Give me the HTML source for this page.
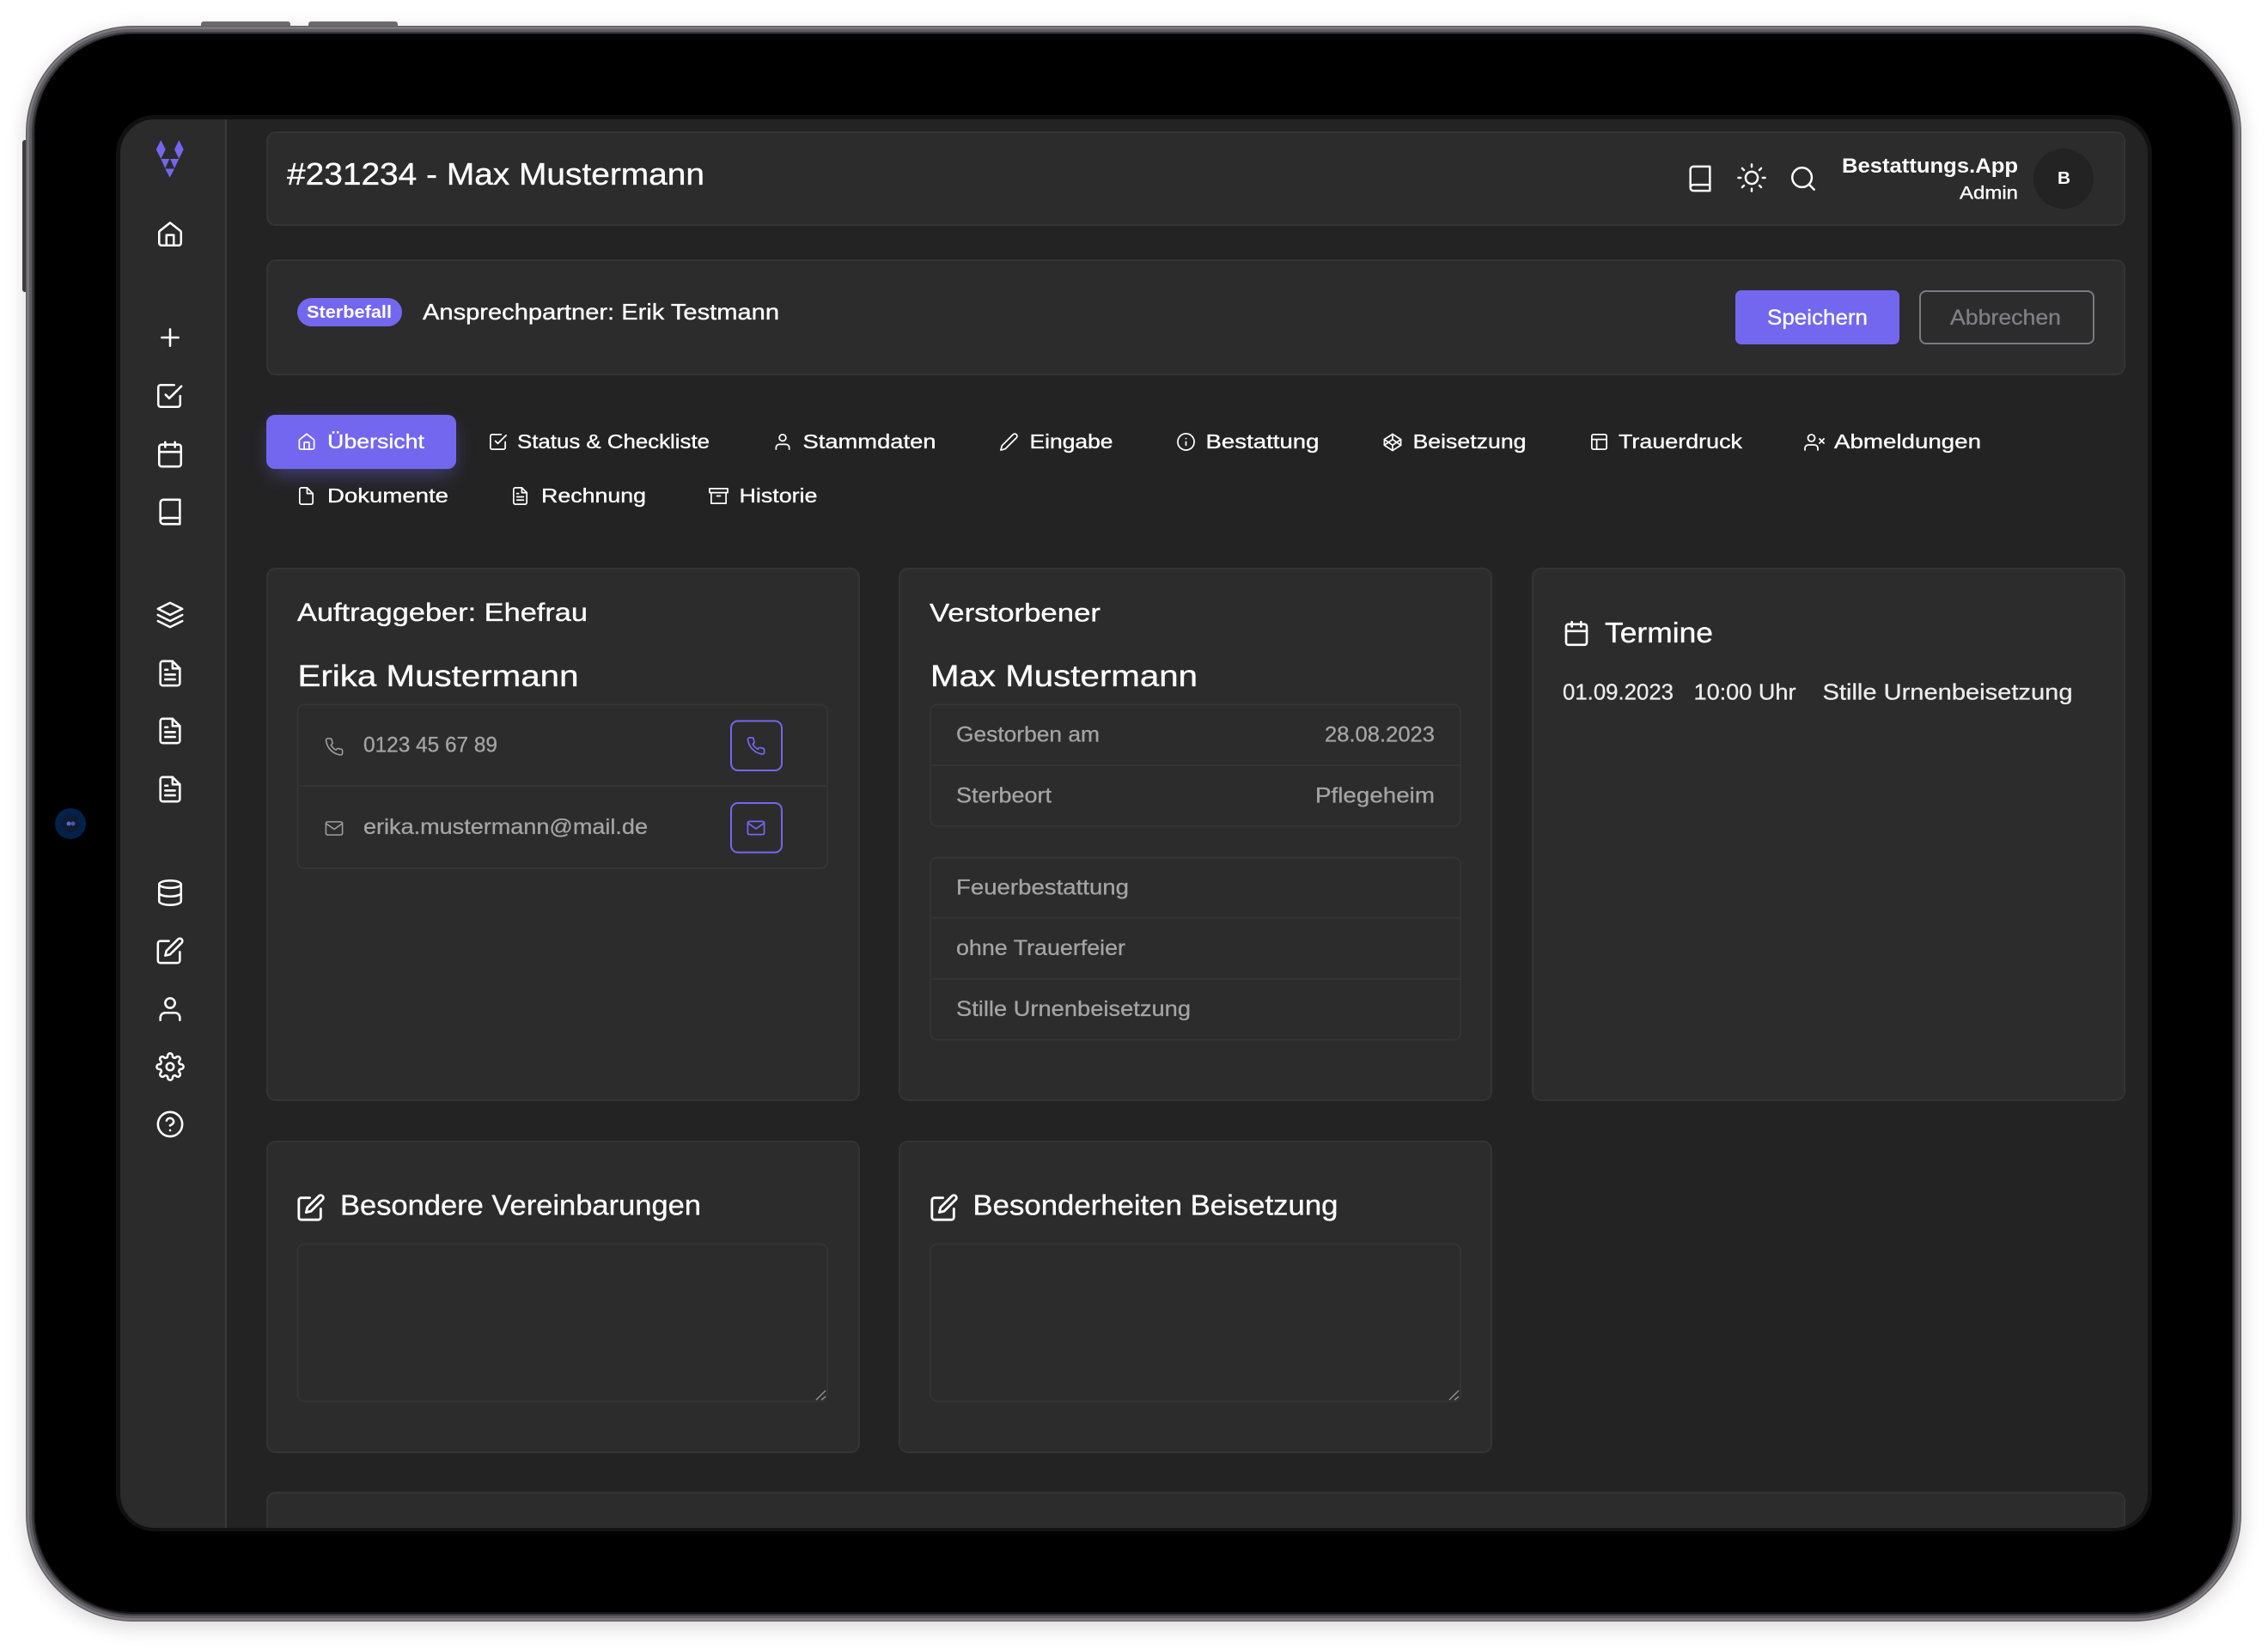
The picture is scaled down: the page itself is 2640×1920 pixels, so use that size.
<!DOCTYPE html>
<html lang="de"><head><meta charset="utf-8"><title>Bestattungs.App</title>
<style>
html,body{margin:0;padding:0;background:#fff;width:2640px;height:1920px;overflow:hidden}
svg{display:block}
text{font-family:"Liberation Sans",sans-serif;white-space:pre}
.w{fill:#fff;stroke:#fff;stroke-width:.35}
.g{fill:#a4a4a4;stroke:#a4a4a4;stroke-width:.3}
symbol *{fill:none;stroke-linecap:round;stroke-linejoin:round}
</style></head><body>
<svg width="2640" height="1920" viewBox="0 0 2640 1920" xmlns="http://www.w3.org/2000/svg">
<defs>
<filter id="sh" x="-5%" y="-5%" width="110%" height="110%"><feGaussianBlur stdDeviation="12"/></filter>
<filter id="gl" x="-40%" y="-60%" width="180%" height="240%"><feGaussianBlur stdDeviation="11"/></filter>
<clipPath id="scr"><rect x="140" y="139" width="2360" height="1640" rx="40"/></clipPath>
<symbol id="home" viewBox="0 0 24 24"><path d="M12 2.400 20.600 9.200c.3.3.4.6.4 1V19a2 2 0 0 1-2 2H5a2 2 0 0 1-2-2v-8.800c0-.4.1-.7.4-1z"/><path d="M9 21v-8.500h6V21"/></symbol>
<symbol id="plus" viewBox="0 0 24 24"><path d="M12 5.200v13.600M5.200 12h13.600"/></symbol>
<symbol id="check" viewBox="0 0 24 24"><path d="M9 11l3 3L22 4"/><path d="M21 12v7a2 2 0 0 1-2 2H5a2 2 0 0 1-2-2V5a2 2 0 0 1 2-2h11"/></symbol>
<symbol id="cal" viewBox="0 0 24 24"><rect x="3" y="4" width="18" height="18" rx="2"/><path d="M16 2v4M8 2v4M3 10h18"/></symbol>
<symbol id="book" viewBox="0 0 24 24"><path d="M4 19.500A2.500 2.500 0 0 1 6.500 17H20"/><path d="M6.500 2H20v20H6.500A2.500 2.500 0 0 1 4 19.500v-15A2.500 2.500 0 0 1 6.500 2z"/></symbol>
<symbol id="layers" viewBox="0 0 24 24"><path d="M12 2 2 7l10 5 10-5z"/><path d="M2 17l10 5 10-5"/><path d="M2 12l10 5 10-5"/></symbol>
<symbol id="ftext" viewBox="0 0 24 24"><path d="M14 2H6a2 2 0 0 0-2 2v16a2 2 0 0 0 2 2h12a2 2 0 0 0 2-2V8z"/><path d="M14 2v6h6M16 13H8M16 17H8M10 9H8"/></symbol>
<symbol id="db" viewBox="0 0 24 24"><ellipse cx="12" cy="5" rx="9" ry="3"/><path d="M21 12c0 1.660-4 3-9 3s-9-1.340-9-3"/><path d="M3 5v14c0 1.660 4 3 9 3s9-1.340 9-3V5"/></symbol>
<symbol id="edit" viewBox="0 0 24 24"><path d="M11 4H4a2 2 0 0 0-2 2v14a2 2 0 0 0 2 2h14a2 2 0 0 0 2-2v-7"/><path d="M18.500 2.500a2.121 2.121 0 0 1 3 3L12 15l-4 1 1-4 9.500-9.500z"/></symbol>
<symbol id="user" viewBox="0 0 24 24"><path d="M20 21v-2a4 4 0 0 0-4-4H8a4 4 0 0 0-4 4v2"/><circle cx="12" cy="7" r="4"/></symbol>
<symbol id="gear" viewBox="0 0 24 24"><circle cx="12" cy="12" r="3"/><path d="M19.400 15a1.650 1.650 0 0 0 .33 1.820l.06.06a2 2 0 0 1 0 2.830 2 2 0 0 1-2.830 0l-.06-.06a1.650 1.650 0 0 0-1.820-.33 1.650 1.650 0 0 0-1 1.510V21a2 2 0 0 1-2 2 2 2 0 0 1-2-2v-.09A1.650 1.650 0 0 0 9 19.400a1.650 1.650 0 0 0-1.820.33l-.06.06a2 2 0 0 1-2.830 0 2 2 0 0 1 0-2.830l.06-.06a1.650 1.650 0 0 0 .33-1.820 1.650 1.650 0 0 0-1.510-1H3a2 2 0 0 1-2-2 2 2 0 0 1 2-2h.09A1.650 1.650 0 0 0 4.600 9a1.650 1.650 0 0 0-.33-1.820l-.06-.06a2 2 0 0 1 0-2.830 2 2 0 0 1 2.830 0l.06.06a1.650 1.650 0 0 0 1.820.33H9a1.650 1.650 0 0 0 1-1.510V3a2 2 0 0 1 2-2 2 2 0 0 1 2 2v.09a1.650 1.650 0 0 0 1 1.510 1.650 1.650 0 0 0 1.820-.33l.06-.06a2 2 0 0 1 2.830 0 2 2 0 0 1 0 2.830l-.06.06a1.650 1.650 0 0 0-.33 1.820V9a1.650 1.650 0 0 0 1.510 1H21a2 2 0 0 1 2 2 2 2 0 0 1-2 2h-.09a1.650 1.650 0 0 0-1.510 1z"/></symbol>
<symbol id="help" viewBox="0 0 24 24"><circle cx="12" cy="12" r="10"/><path d="M9.090 9a3 3 0 0 1 5.830 1c0 2-3 3-3 3M12 17h.01"/></symbol>
<symbol id="sun" viewBox="0 0 24 24"><circle cx="12" cy="12" r="5"/><path d="M12 1v2M12 21v2M4.220 4.220l1.420 1.420M18.360 18.360l1.420 1.420M1 12h2M21 12h2M4.220 19.780l1.420-1.420M18.360 5.640l1.420-1.420"/></symbol>
<symbol id="search" viewBox="0 0 24 24"><circle cx="11" cy="11" r="8"/><path d="M21 21l-4.350-4.350"/></symbol>
<symbol id="phone" viewBox="0 0 24 24"><path d="M22 16.920v3a2 2 0 0 1-2.180 2 19.790 19.790 0 0 1-8.630-3.070 19.500 19.500 0 0 1-6-6 19.790 19.790 0 0 1-3.070-8.670A2 2 0 0 1 4.110 2h3a2 2 0 0 1 2 1.720 12.840 12.840 0 0 0 .7 2.810 2 2 0 0 1-.45 2.110L8.090 9.910a16 16 0 0 0 6 6l1.270-1.270a2 2 0 0 1 2.110-.45 12.840 12.840 0 0 0 2.810.7A2 2 0 0 1 22 16.920z"/></symbol>
<symbol id="mail" viewBox="0 0 24 24"><path d="M4 4h16c1.100 0 2 .9 2 2v12c0 1.100-.9 2-2 2H4c-1.100 0-2-.9-2-2V6c0-1.100.9-2 2-2z"/><path d="M22 6l-10 7L2 6"/></symbol>
<symbol id="pen" viewBox="0 0 24 24"><path d="M17 3a2.828 2.828 0 1 1 4 4L7.500 20.500 2 22l1.500-5.500L17 3z"/></symbol>
<symbol id="info" viewBox="0 0 24 24"><circle cx="12" cy="12" r="10"/><path d="M12 16v-4M12 8h.01"/></symbol>
<symbol id="codepen" viewBox="0 0 24 24"><path d="M12 2 22 8.500v7L12 22 2 15.500v-7z"/><path d="M12 22v-6.500M22 8.500l-10 7-10-7M2 15.500l10-7 10 7M12 2v6.500"/></symbol>
<symbol id="layout" viewBox="0 0 24 24"><rect x="3" y="3" width="18" height="18" rx="2"/><path d="M3 9h18M9 21V9"/></symbol>
<symbol id="userx" viewBox="0 0 24 24"><path d="M16 21v-2a4 4 0 0 0-4-4H5a4 4 0 0 0-4 4v2"/><circle cx="8.500" cy="7" r="4"/><path d="M18 8l5 5M23 8l-5 5"/></symbol>
<symbol id="file" viewBox="0 0 24 24"><path d="M13 2H6a2 2 0 0 0-2 2v16a2 2 0 0 0 2 2h12a2 2 0 0 0 2-2V9z"/><path d="M13 2v7h7"/></symbol>
<symbol id="arch" viewBox="0 0 24 24"><path d="M21 8v13H3V8"/><rect x="1" y="3" width="22" height="5"/><path d="M10 12h4"/></symbol>
</defs>

<!-- device -->
<rect x="30" y="36" width="2579" height="1858" rx="125" fill="#000" opacity=".16" filter="url(#sh)"/>
<rect x="234" y="25" width="104" height="10" rx="3" fill="#6c6a70"/>
<rect x="359" y="25" width="104" height="10" rx="3" fill="#6c6a70"/>
<rect x="26" y="163" width="10" height="177" rx="3" fill="#3e3d42"/>
<rect x="30" y="30" width="2579" height="1858" rx="125" fill="#5f5d62"/>
<rect x="32.500" y="32.500" width="2574" height="1853" rx="122.500" fill="none" stroke="#87858a" stroke-width="2.500" opacity=".75"/>
<rect x="37" y="37" width="2565" height="1844" rx="118" fill="#3a393d"/>
<rect x="39.500" y="39" width="2560" height="1840" rx="116" fill="#141414"/>
<rect x="41" y="40" width="2557" height="1837" rx="114" fill="#000"/>
<circle cx="82" cy="959" r="18" fill="#04214a"/><circle cx="82" cy="959" r="10" fill="#101a30"/><circle cx="80" cy="959" r="2.500" fill="#5a66c8"/><circle cx="85" cy="959" r="2.500" fill="#4a56b0"/>
<rect x="135" y="134" width="2370" height="1649" rx="45" fill="#111"/>

<g clip-path="url(#scr)">
<rect x="140" y="139" width="2360" height="1640" fill="#232323"/>
<rect x="140" y="139" width="122" height="1640" fill="#2b2b2b"/>
<rect x="262" y="139" width="2" height="1640" fill="#3a3a3a"/>

<!-- logo -->
<g fill="#7367f0">
<path d="M181.700 174 187.300 163.300 192.700 174 187.300 185z"/>
<path d="M203 174 208.300 163.300 213.700 174 208.300 185z"/>
<path d="M187.300 185H197.200L192.300 196z"/><path d="M198.200 185H208.300L203 196z"/>
<path d="M192.300 196.500H203L197.700 206.700z"/>
</g>

<!-- sidebar icons -->
<g stroke="#fff" stroke-width="1.800">
<use href="#home" x="181" y="256" width="34" height="34"/>
<use href="#plus" x="181" y="376" width="34" height="34"/>
<use href="#check" x="180" y="444" width="34" height="34"/>
<use href="#cal" x="181" y="512" width="34" height="34"/>
<use href="#book" x="181" y="579" width="34" height="34"/>
<use href="#layers" x="181" y="699" width="34" height="34"/>
<use href="#ftext" x="181" y="767" width="34" height="34"/>
<use href="#ftext" x="181" y="834" width="34" height="34"/>
<use href="#ftext" x="181" y="902" width="34" height="34"/>
<use href="#db" x="181" y="1022.500" width="34" height="34"/>
<use href="#edit" x="181" y="1090" width="34" height="34"/>
<use href="#user" x="181" y="1158" width="34" height="34"/>
<use href="#gear" x="181" y="1225" width="34" height="34"/>
<use href="#help" x="181" y="1292" width="34" height="34"/>
</g>

<!-- cards -->
<g fill="#2c2c2c" stroke="#343434" stroke-width="2">
<rect x="311" y="154" width="2162" height="108" rx="10"/>
<rect x="311" y="303" width="2162" height="133" rx="10"/>
<rect x="311" y="662" width="689" height="619" rx="10"/>
<rect x="1047" y="662" width="689" height="619" rx="10"/>
<rect x="1784" y="662" width="689" height="619" rx="10"/>
<rect x="311" y="1329" width="689" height="362" rx="10"/>
<rect x="1047" y="1329" width="689" height="362" rx="10"/>
<rect x="311" y="1738" width="2162" height="100" rx="10"/>
</g>

<!-- header -->
<text x="334" y="215" font-size="36" textLength="486" lengthAdjust="spacingAndGlyphs" class="w">#231234 - Max Mustermann</text>
<g stroke="#fff" stroke-width="1.750">
<use href="#book" x="1962" y="191" width="34" height="34"/>
<use href="#sun" x="2022" y="190" width="34" height="34"/>
<use href="#search" x="2082" y="191" width="34" height="34"/>
</g>
<text x="2144" y="201" font-size="24" font-weight="700" textLength="205" lengthAdjust="spacingAndGlyphs" fill="#fff">Bestattungs.App</text>
<text x="2281" y="231.500" font-size="21" textLength="68" lengthAdjust="spacingAndGlyphs" class="w">Admin</text>
<circle cx="2402" cy="208" r="35" fill="#232323"/>
<text x="2395" y="214" font-size="20" font-weight="700" textLength="15" lengthAdjust="spacingAndGlyphs" fill="#fff">B</text>

<!-- status bar -->
<rect x="346" y="347" width="122" height="33" rx="16.500" fill="#7367f0"/>
<text x="357" y="370" font-size="20" font-weight="700" textLength="99" lengthAdjust="spacingAndGlyphs" fill="#fff">Sterbefall</text>
<text x="492" y="372" font-size="26" textLength="415" lengthAdjust="spacingAndGlyphs" class="w">Ansprechpartner: Erik Testmann</text>
<rect x="2020" y="338" width="191" height="63" rx="7" fill="#7367f0"/>
<text x="2057" y="378" font-size="25" textLength="117" lengthAdjust="spacingAndGlyphs" class="w">Speichern</text>
<rect x="2235" y="339" width="202" height="61" rx="7" fill="none" stroke="#7b7b80" stroke-width="2"/>
<text x="2270" y="378" font-size="25" textLength="129" lengthAdjust="spacingAndGlyphs" fill="#7f7f84" stroke="#7f7f84" stroke-width=".3">Abbrechen</text>

<!-- tabs -->
<rect x="314" y="493" width="214" height="60" rx="10" fill="#7367f0" opacity=".38" filter="url(#gl)"/>
<rect x="310" y="483" width="221" height="63" rx="10" fill="#7367f0"/>
<g font-size="23.500">
<text x="381" y="522" textLength="113" lengthAdjust="spacingAndGlyphs" class="w">Übersicht</text>
<text x="602" y="522" textLength="224" lengthAdjust="spacingAndGlyphs" class="w">Status &amp; Checkliste</text>
<text x="934.500" y="522" textLength="155" lengthAdjust="spacingAndGlyphs" class="w">Stammdaten</text>
<text x="1198.500" y="522" textLength="97" lengthAdjust="spacingAndGlyphs" class="w">Eingabe</text>
<text x="1403.500" y="522" textLength="132" lengthAdjust="spacingAndGlyphs" class="w">Bestattung</text>
<text x="1644.500" y="522" textLength="132" lengthAdjust="spacingAndGlyphs" class="w">Beisetzung</text>
<text x="1884" y="522" textLength="144" lengthAdjust="spacingAndGlyphs" class="w">Trauerdruck</text>
<text x="2135" y="522" textLength="171" lengthAdjust="spacingAndGlyphs" class="w">Abmeldungen</text>
<text x="381" y="585" textLength="141" lengthAdjust="spacingAndGlyphs" class="w">Dokumente</text>
<text x="630" y="585" textLength="122" lengthAdjust="spacingAndGlyphs" class="w">Rechnung</text>
<text x="860.500" y="585" textLength="91" lengthAdjust="spacingAndGlyphs" class="w">Historie</text>
</g>
<g stroke="#fff" stroke-width="1.800">
<use href="#home" x="345.500" y="503" width="23" height="23"/>
<use href="#check" x="568" y="503" width="23" height="23"/>
<use href="#user" x="899.500" y="503" width="23" height="23"/>
<use href="#pen" x="1163" y="503" width="23" height="23"/>
<use href="#info" x="1369" y="503" width="23" height="23"/>
<use href="#codepen" x="1609.500" y="503.500" width="23" height="23"/>
<use href="#layout" x="1850" y="503" width="23" height="23"/>
<use href="#userx" x="2100" y="503" width="24" height="24"/>
<use href="#file" x="345" y="566" width="23" height="23"/>
<use href="#ftext" x="594" y="566" width="23" height="23"/>
<use href="#arch" x="825" y="566" width="23" height="23"/>
</g>

<!-- Auftraggeber -->
<text x="346" y="723" font-size="30" textLength="338" lengthAdjust="spacingAndGlyphs" class="w">Auftraggeber: Ehefrau</text>
<text x="346.500" y="799" font-size="35" textLength="327" lengthAdjust="spacingAndGlyphs" class="w">Erika Mustermann</text>
<rect x="346.500" y="820.500" width="616.500" height="190.500" rx="8" fill="none" stroke="#343434" stroke-width="2"/>
<rect x="347" y="914" width="616" height="2" fill="#343434"/>
<g stroke="#a0a0a0" stroke-width="1.600">
<use href="#phone" x="377.500" y="858" width="23" height="23"/>
<use href="#mail" x="377.500" y="953" width="23" height="23"/>
</g>
<text x="423" y="875.500" font-size="25" textLength="156" lengthAdjust="spacingAndGlyphs" class="g">0123 45 67 89</text>
<text x="423" y="971" font-size="25" textLength="331" lengthAdjust="spacingAndGlyphs" class="g">erika.mustermann@mail.de</text>
<rect x="851" y="839.500" width="59" height="57.500" rx="8" fill="none" stroke="#7367f0" stroke-width="2"/>
<rect x="851" y="935" width="59" height="57.500" rx="8" fill="none" stroke="#7367f0" stroke-width="2"/>
<g stroke="#7367f0" stroke-width="1.800">
<use href="#phone" x="868.500" y="857" width="23" height="23"/>
<use href="#mail" x="868.500" y="952.500" width="23" height="23"/>
</g>

<!-- Verstorbener -->
<text x="1082" y="723.500" font-size="30" textLength="199" lengthAdjust="spacingAndGlyphs" class="w">Verstorbener</text>
<text x="1083" y="799" font-size="35" textLength="311" lengthAdjust="spacingAndGlyphs" class="w">Max Mustermann</text>
<rect x="1083" y="820.500" width="617" height="141.500" rx="8" fill="none" stroke="#343434" stroke-width="2"/>
<rect x="1083" y="890" width="617" height="2" fill="#343434"/>
<text x="1113" y="863.500" font-size="25" textLength="167" lengthAdjust="spacingAndGlyphs" class="g">Gestorben am</text>
<text x="1542" y="863.500" font-size="25" textLength="128" lengthAdjust="spacingAndGlyphs" class="g">28.08.2023</text>
<text x="1113" y="934.500" font-size="25" textLength="111" lengthAdjust="spacingAndGlyphs" class="g">Sterbeort</text>
<text x="1531" y="934.500" font-size="25" textLength="139" lengthAdjust="spacingAndGlyphs" class="g">Pflegeheim</text>
<rect x="1083" y="998.500" width="617" height="212" rx="8" fill="none" stroke="#343434" stroke-width="2"/>
<rect x="1083" y="1067.500" width="617" height="2" fill="#343434"/>
<rect x="1083" y="1139" width="617" height="2" fill="#343434"/>
<text x="1113" y="1041.500" font-size="25" textLength="201" lengthAdjust="spacingAndGlyphs" class="g">Feuerbestattung</text>
<text x="1113" y="1112" font-size="25" textLength="197" lengthAdjust="spacingAndGlyphs" class="g">ohne Trauerfeier</text>
<text x="1113" y="1183" font-size="25" textLength="273" lengthAdjust="spacingAndGlyphs" class="g">Stille Urnenbeisetzung</text>

<!-- Termine -->
<use href="#cal" x="1819" y="721.500" width="32" height="32" stroke="#fff" stroke-width="2"/>
<text x="1868" y="748" font-size="33" textLength="126" lengthAdjust="spacingAndGlyphs" class="w">Termine</text>
<g font-size="26" fill="#ececec" stroke="#ececec" stroke-width=".3">
<text x="1819" y="814.500" textLength="129" lengthAdjust="spacingAndGlyphs">01.09.2023</text>
<text x="1971.500" y="814.500" textLength="119" lengthAdjust="spacingAndGlyphs">10:00 Uhr</text>
<text x="2121.500" y="814.500" textLength="291" lengthAdjust="spacingAndGlyphs">Stille Urnenbeisetzung</text>
</g>

<!-- Notes -->
<g stroke="#fff" stroke-width="2">
<use href="#edit" x="345" y="1389" width="34" height="34"/>
<use href="#edit" x="1082" y="1389" width="34" height="34"/>
</g>
<text x="396" y="1414.500" font-size="33" textLength="420" lengthAdjust="spacingAndGlyphs" class="w">Besondere Vereinbarungen</text>
<text x="1132.500" y="1414.500" font-size="33" textLength="425" lengthAdjust="spacingAndGlyphs" class="w">Besonderheiten Beisetzung</text>
<rect x="346.500" y="1448.500" width="616.500" height="183" rx="8" fill="none" stroke="#343434" stroke-width="2"/>
<rect x="1083" y="1448.500" width="617" height="183" rx="8" fill="none" stroke="#343434" stroke-width="2"/>
<g stroke="#8e8e8e" stroke-width="1.500" fill="none">
<path d="M961 1619 950 1630M961 1626 956 1630"/>
<path d="M1698 1619 1687 1630M1698 1626 1693 1630"/>
</g>
</g>
</svg>
</body></html>
